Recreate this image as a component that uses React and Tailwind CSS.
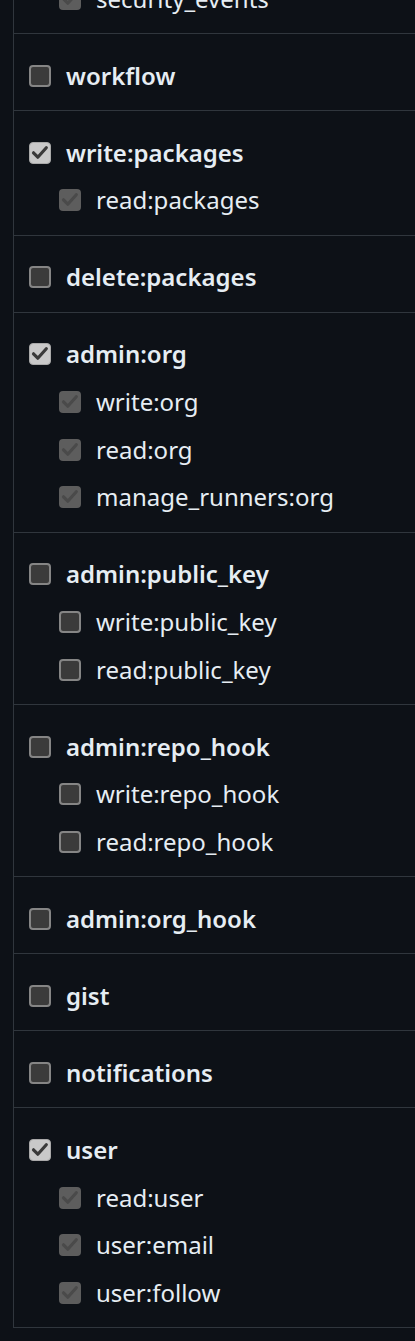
import React from "react";

const sections = [
  { partial: true, checked: true, children: ["security_events"] },
  { label: "workflow" },
  { label: "write:packages", checked: true, children: ["read:packages"] },
  { label: "delete:packages" },
  { label: "admin:org", checked: true, children: ["write:org", "read:org", "manage_runners:org"] },
  { label: "admin:public_key", children: ["write:public_key", "read:public_key"] },
  { label: "admin:repo_hook", children: ["write:repo_hook", "read:repo_hook"] },
  { label: "admin:org_hook" },
  { label: "gist" },
  { label: "notifications" },
  { label: "user", checked: true, children: ["read:user", "user:email", "user:follow"] },
];

function Check({ color }) {
  return (
    <svg width="22" height="22" viewBox="0 0 22 22" className="absolute inset-0">
      <path d="M4.5 10.8 L8.8 15.2 L17.3 5.8" fill="none" stroke={color} strokeWidth="3.2" strokeLinecap="round" strokeLinejoin="round" />
    </svg>
  );
}

function Box({ state }) {
  if (state === "checked") {
    return (
      <span className="relative block w-[22px] h-[22px] shrink-0 rounded-[4px] bg-[#c9c9c9] border border-[#a9a9a9]">
        <span className="absolute -inset-px">
          <Check color="#3a3a3a" />
        </span>
      </span>
    );
  }
  if (state === "disabled") {
    return (
      <span className="relative block w-[22px] h-[22px] shrink-0 rounded-[4px] bg-[#5d5d5d]">
        <Check color="#4a4a4a" />
      </span>
    );
  }
  return <span className="block w-[22px] h-[22px] shrink-0 rounded-[4px] bg-[#3b3b3b] border-[2px] border-[#858585]" />;
}

function Row({ label, state, child }) {
  return (
    <div className={`flex items-center h-[47.67px] gap-[15px] ${child ? "pl-[45px]" : "pl-[15px]"}`}>
      <Box state={state} />
      <span
        className={`leading-none text-[#e6edf3] whitespace-nowrap ${
          child ? "font-normal text-[24px]" : "font-semibold text-[24px]"
        }`}
      >
        {label}
      </span>
    </div>
  );
}

export default function App() {
  return (
    <div className="min-h-screen w-full bg-[#0d1117] overflow-hidden" style={{ fontFamily: '"Noto Sans", "Open Sans", sans-serif' }}>
      <div className="ml-[13px] min-h-screen border-l border-[#30363d]">
        {sections.map((s, i) => (
          <div
            key={i}
            className={`border-b border-[#30363d] pb-[10.33px] ${s.partial ? "-mt-[25px]" : "pt-[18px]"}`}
          >
            {!s.partial && <Row label={s.label} state={s.checked ? "checked" : "unchecked"} />}
            {(s.children || []).map((c) => (
              <Row key={c} label={c} child state={s.checked ? "disabled" : "unchecked"} />
            ))}
          </div>
        ))}
      </div>
    </div>
  );
}
